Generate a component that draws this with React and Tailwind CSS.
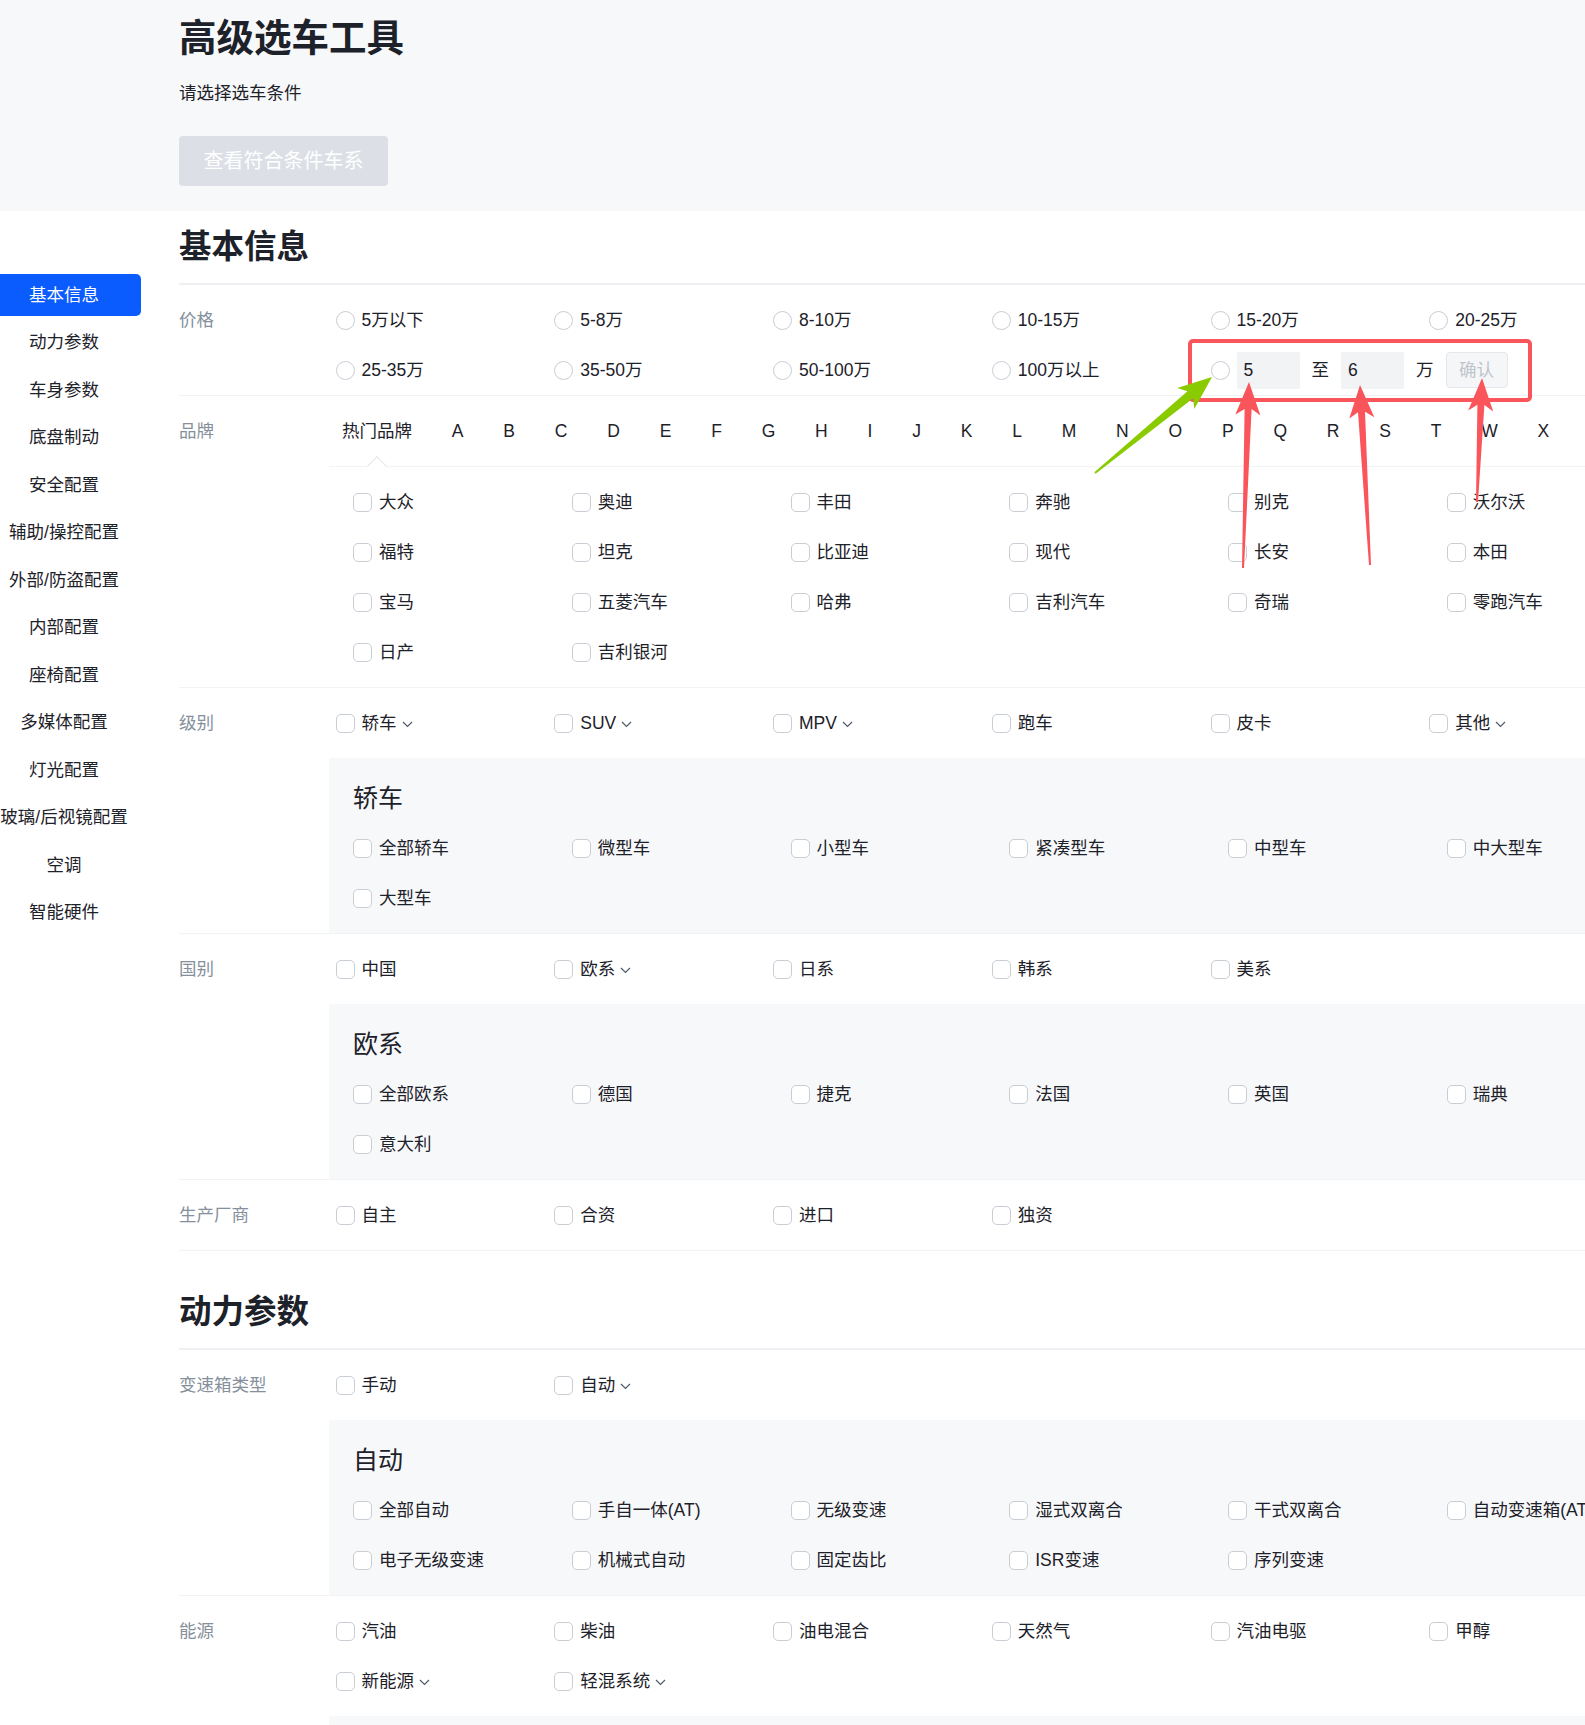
import React from 'react';

const NAV = [
  '基本信息', '动力参数', '车身参数', '底盘制动', '安全配置', '辅助/操控配置', '外部/防盗配置',
  '内部配置', '座椅配置', '多媒体配置', '灯光配置', '玻璃/后视镜配置', '空调', '智能硬件',
];

const LETTERS = ['A', 'B', 'C', 'D', 'E', 'F', 'G', 'H', 'I', 'J', 'K', 'L', 'M', 'N', 'O', 'P', 'Q', 'R', 'S', 'T', 'W', 'X'];

const BRANDS = [
  '大众', '奥迪', '丰田', '奔驰', '别克', '沃尔沃',
  '福特', '坦克', '比亚迪', '现代', '长安', '本田',
  '宝马', '五菱汽车', '哈弗', '吉利汽车', '奇瑞', '零跑汽车',
  '日产', '吉利银河',
];

// arrow polygon from tail (tx,ty) to tip (px,py)
function arrowPoints(tx, ty, px, py, head, half, neck, tail) {
  const dx = px - tx;
  const dy = py - ty;
  const len = Math.hypot(dx, dy);
  const ux = dx / len;
  const uy = dy / len;
  const nx = -uy;
  const ny = ux;
  const at = (d, w) => `${(px - ux * d + nx * w).toFixed(1)},${(py - uy * d + ny * w).toFixed(1)}`;
  return [
    at(0, 0), at(head, half), at(head - 6, neck), at(len, tail),
    at(len, -tail), at(head - 6, -neck), at(head, -half),
  ].join(' ');
}

function Chevron() {
  return (
    <svg width="11" height="7" viewBox="0 0 11 7" className="ml-[5px] mt-[2px] shrink-0">
      <path d="M1 1l4.5 4.5L10 1" fill="none" stroke="#4e5969" strokeWidth="1.2" />
    </svg>
  );
}

function Check({ label, chevron }) {
  return (
    <div className="flex h-[50px] items-center">
      <span className="h-[19px] w-[19px] shrink-0 rounded-[5px] border border-[#c9cdd4] bg-white" />
      <span className="ml-[7px] whitespace-nowrap">{label}</span>
      {chevron && <Chevron />}
    </div>
  );
}

function Radio({ label }) {
  return (
    <div className="flex h-[50px] items-center">
      <span className="h-[19px] w-[19px] shrink-0 rounded-full border border-[#c9cdd4] bg-white" />
      <span className="ml-[7px] whitespace-nowrap">{label}</span>
    </div>
  );
}

function Grid({ items, className = '' }) {
  return (
    <div className={`grid grid-cols-[repeat(6,218.75px)] ${className}`}>
      {items.map((it) => {
        const o = typeof it === 'string' ? { label: it } : it;
        return <Check key={o.label} label={o.label} chevron={o.chevron} />;
      })}
    </div>
  );
}

function Panel({ title, items }) {
  return (
    <div className="bg-[#f7f8fa] pb-[10px] pl-[24px] pt-[20px]">
      <div className="mb-[5px] h-[40px] text-[25px] leading-[40px]">{title}</div>
      <Grid items={items} />
    </div>
  );
}

function Row({ label, children }) {
  return (
    <div className="flex border-b border-[#f2f3f5]">
      <div className="w-[150px] shrink-0 whitespace-nowrap pt-[10px] leading-[50px] text-[#86909c]">{label}</div>
      <div className="min-w-0 flex-1">{children}</div>
    </div>
  );
}

function SectionTitle({ children, className = '' }) {
  return (
    <h2 className={`flex h-[74px] items-center border-b-2 border-[#eff0f3] text-[32.5px] font-bold text-[#1d2129] ${className}`}>
      {children}
    </h2>
  );
}

function Annotations() {
  const red = '#f9555a';
  return (
    <svg className="pointer-events-none absolute left-0 top-0" width="1585" height="1725">
      <rect x="1190" y="341" width="340" height="59" rx="3" fill="none" stroke={red} strokeWidth="4" />
      <polygon points={arrowPoints(1243, 568, 1249, 382, 33, 12.5, 3.5, 1)} fill={red} />
      <polygon points={arrowPoints(1370, 565, 1360, 385, 33, 12.5, 3.5, 1)} fill={red} />
      <polygon points={arrowPoints(1477, 502, 1482, 378, 33, 12.5, 3.5, 1)} fill={red} />
      <polygon points={arrowPoints(1095, 473, 1212, 377, 34, 13.5, 4.5, 1)} fill="#8acb00" />
    </svg>
  );
}

export default function App() {
  return (
    <div className="relative h-[1725px] w-[1585px] overflow-hidden bg-white font-['Liberation_Sans','Noto_Sans_CJK_SC',sans-serif] text-[17.5px] text-[#1d2129]">
      {/* header */}
      <header className="h-[211px] bg-[#f7f8fa] pl-[179px] pt-[14px]">
        <h1 className="text-[37.5px] font-bold leading-[49px] text-[#1d2129]">高级选车工具</h1>
        <p className="mt-[17px] leading-[26px]">请选择选车条件</p>
        <button className="mt-[30px] h-[50px] w-[209px] rounded-[4px] bg-[#dcdfe6] text-[20px] text-white">
          查看符合条件车系
        </button>
      </header>

      <div className="flex">
        {/* side nav */}
        <nav className="w-[141px] shrink-0 pt-[63px]">
          {NAV.map((n, i) => (
            <div
              key={n}
              className={`mb-[5.5px] flex h-[42px] items-center justify-center whitespace-nowrap pr-[13px]
                ${i === 0 ? 'rounded-r-[5px] bg-[#0b5cff] text-white' : 'text-[#1d2129]'}`}
            >
              {n}
            </div>
          ))}
        </nav>

        {/* main */}
        <main className="ml-[38px] w-[1469px] shrink-0">
          <SectionTitle>基本信息</SectionTitle>

          <Row label="价格">
            <div className="grid grid-cols-[repeat(6,218.75px)] pl-[6.5px] pt-[10px]">
              {['5万以下', '5-8万', '8-10万', '10-15万', '15-20万', '20-25万', '25-35万', '35-50万', '50-100万', '100万以上'].map((p) => (
                <Radio key={p} label={p} />
              ))}
              <div className="col-span-2 flex h-[50px] items-center">
                <span className="h-[19px] w-[19px] shrink-0 rounded-full border border-[#c9cdd4] bg-white" />
                <div className="ml-[7px] flex h-[37px] w-[63px] items-center rounded-[2px] bg-[#f2f3f5] pl-[7px]">5</div>
                <span className="mx-[12px]">至</span>
                <div className="flex h-[37px] w-[63px] items-center rounded-[2px] bg-[#f2f3f5] pl-[7px]">6</div>
                <span className="mx-[12px]">万</span>
                <button className="h-[36px] w-[62px] rounded-[4px] border border-[#e5e6eb] bg-[#f5f6f7] text-[#c0c4cc]">确认</button>
              </div>
            </div>
          </Row>

          <Row label="品牌">
            <div className="flex gap-[39.8px] border-b border-[#f2f3f5] pb-[10px] pl-[13px] pt-[10px]">
              <div className="relative h-[50px] whitespace-nowrap leading-[50px]">
                热门品牌
                <span className="absolute left-[calc(50%-7px)] top-[53px] h-[14px] w-[14px] rotate-45 border-l border-t border-[#e5e6eb] bg-white" />
              </div>
              {LETTERS.map((l) => (
                <span key={l} className="h-[50px] leading-[50px]">{l}</span>
              ))}
            </div>
            <Grid items={BRANDS} className="py-[10px] pl-[24px]" />
          </Row>

          <Row label="级别">
            <Grid
              className="py-[10px] pl-[6.5px]"
              items={[{ label: '轿车', chevron: true }, { label: 'SUV', chevron: true }, { label: 'MPV', chevron: true }, '跑车', '皮卡', { label: '其他', chevron: true }]}
            />
            <Panel title="轿车" items={['全部轿车', '微型车', '小型车', '紧凑型车', '中型车', '中大型车', '大型车']} />
          </Row>

          <Row label="国别">
            <Grid className="py-[10px] pl-[6.5px]" items={['中国', { label: '欧系', chevron: true }, '日系', '韩系', '美系']} />
            <Panel title="欧系" items={['全部欧系', '德国', '捷克', '法国', '英国', '瑞典', '意大利']} />
          </Row>

          <Row label="生产厂商">
            <Grid className="py-[10px] pl-[6.5px]" items={['自主', '合资', '进口', '独资']} />
          </Row>

          <SectionTitle className="mt-[25px]">动力参数</SectionTitle>

          <Row label="变速箱类型">
            <Grid className="py-[10px] pl-[6.5px]" items={['手动', { label: '自动', chevron: true }]} />
            <Panel
              title="自动"
              items={['全部自动', '手自一体(AT)', '无级变速', '湿式双离合', '干式双离合', '自动变速箱(AT)', '电子无级变速', '机械式自动', '固定齿比', 'ISR变速', '序列变速']}
            />
          </Row>

          <Row label="能源">
            <Grid
              className="py-[10px] pl-[6.5px]"
              items={['汽油', '柴油', '油电混合', '天然气', '汽油电驱', '甲醇', { label: '新能源', chevron: true }, { label: '轻混系统', chevron: true }]}
            />
            {/* sub-panel that continues below the fold */}
            <div className="h-[60px] bg-[#f7f8fa]" />
          </Row>
        </main>
      </div>

      <Annotations />
    </div>
  );
}
